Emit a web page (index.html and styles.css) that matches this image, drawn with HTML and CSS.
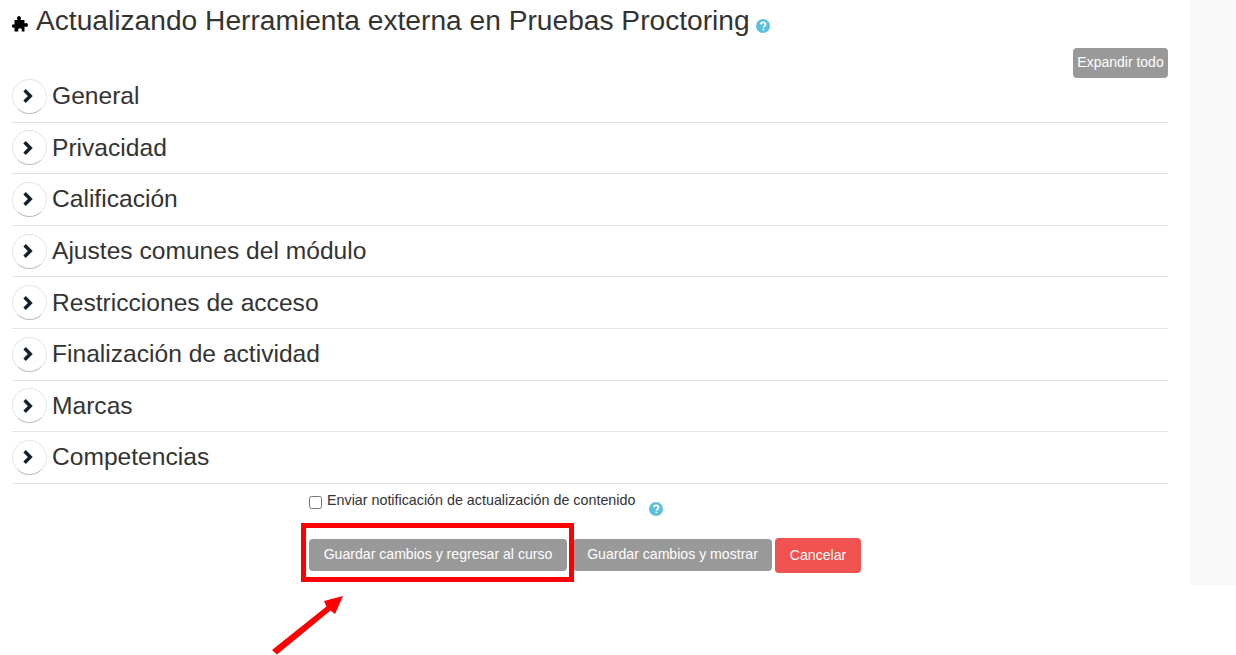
FILE: index.html
```html
<!DOCTYPE html>
<html lang="es">
<head>
    <meta charset="UTF-8">
    <title>Actualizando Herramienta externa</title>
    <link rel="stylesheet" href="styles.css">
</head>
<body>
    <div class="page">
        <main class="content">
            <h1 class="page-title">
                <svg class="puzzle" viewBox="0 0 16 16"><path d="M5 2.300C5 1 5.800 0 7 0s2 1 2 2.300C9 3.200 8.600 3.600 8.600 4H12.500v3.500c.5 0 .9-.4 1.500-.4 1.200 0 2 .8 2 1.900S15.200 11 14 11c-.6 0-1-.4-1.500-.4V15.500H9.500c0-.5.4-.9.4-1.500 0-1-.8-1.700-1.900-1.700s-1.900.7-1.900 1.700c0 .6.400 1 .4 1.500H2.500v-4c-.5 0-.9.300-1.300.300C.5 11.800 0 11 0 10s.5-1.800 1.200-1.800c.4 0 .8.300 1.300.3V4h3C5.500 3.500 5 3.100 5 2.300z"/></svg>
                <span>Actualizando Herramienta externa en Pruebas Proctoring</span>
                <svg class="help help-title" viewBox="0 0 14 14"><circle cx="7" cy="7" r="7"/><path class="help-mark" d="M4.700 5.400C4.800 4 5.800 3.300 7.100 3.300c1.400 0 2.400.8 2.400 2 0 1.900-2.100 1.800-2.100 3.200M7.400 9.800v1.400"/></svg>
            </h1>
            <div class="expand-row">
                <a class="btn btn-small" href="#">Expandir todo</a>
            </div>
            <div class="section"><span class="toggle"><svg viewBox="0 0 12 14"><path d="M3 2l5 5-5 5"/></svg></span><h2>General</h2></div>
            <div class="section"><span class="toggle"><svg viewBox="0 0 12 14"><path d="M3 2l5 5-5 5"/></svg></span><h2>Privacidad</h2></div>
            <div class="section"><span class="toggle"><svg viewBox="0 0 12 14"><path d="M3 2l5 5-5 5"/></svg></span><h2>Calificación</h2></div>
            <div class="section"><span class="toggle"><svg viewBox="0 0 12 14"><path d="M3 2l5 5-5 5"/></svg></span><h2>Ajustes comunes del módulo</h2></div>
            <div class="section"><span class="toggle"><svg viewBox="0 0 12 14"><path d="M3 2l5 5-5 5"/></svg></span><h2>Restricciones de acceso</h2></div>
            <div class="section"><span class="toggle"><svg viewBox="0 0 12 14"><path d="M3 2l5 5-5 5"/></svg></span><h2>Finalización de actividad</h2></div>
            <div class="section"><span class="toggle"><svg viewBox="0 0 12 14"><path d="M3 2l5 5-5 5"/></svg></span><h2>Marcas</h2></div>
            <div class="section"><span class="toggle"><svg viewBox="0 0 12 14"><path d="M3 2l5 5-5 5"/></svg></span><h2>Competencias</h2></div>
            <div class="notify">
                <input type="checkbox" id="notify">
                <label for="notify">Enviar notificación de actualización de contenido</label>
                <svg class="help help-notify" viewBox="0 0 14 14"><circle cx="7" cy="7" r="7"/><path class="help-mark" d="M4.700 5.400C4.800 4 5.800 3.300 7.100 3.300c1.400 0 2.400.8 2.400 2 0 1.900-2.100 1.800-2.100 3.200M7.400 9.800v1.400"/></svg>
            </div>
            <div class="actions">
                <a class="btn btn-save" href="#">Guardar cambios y regresar al curso</a>
                <a class="btn btn-show" href="#">Guardar cambios y mostrar</a>
                <a class="btn btn-cancel" href="#">Cancelar</a>
                <span class="mark-box"></span>
            </div>
        </main>
        <aside class="side"></aside>
    </div>
    <svg class="mark-arrow" viewBox="0 0 90 70"><path d="M2 60L56.500 16.500 54 11 73 6 65 24 60.500 20.500 7 64.500z"/></svg>
</body>
</html>
```

FILE: styles.css
```css
body {
    margin: 0;
    height: 655px;
    overflow: hidden;
    position: relative;
    background-color: white;
    font-family: "Liberation Sans", Arial, sans-serif;
    color: #333;
}
.page {
    display: flex;
    height: 585px;
}
.content {
    width: 1156px;
    padding: 0 22px 0 12px;
}
.side {
    width: 46px;
    background-color: #f9f9f9;
}
.page-title {
    display: flex;
    align-items: center;
    height: 41px;
    margin: 0;
    font-size: 28.160px;
    font-weight: normal;
    line-height: 41px;
}
.puzzle {
    width: 16px;
    height: 16px;
    margin-right: 8px;
    margin-top: 6px;
    fill: #000;
}
.help {
    width: 14px;
    height: 14px;
    fill: #5bc0de;
}
.help-mark {
    fill: none;
    stroke: white;
    stroke-width: 1.800;
}
.help-title {
    margin: 11px 0 0 6px;
}
.expand-row {
    display: flex;
    justify-content: flex-end;
    height: 23px;
    padding-top: 7px;
}
.btn {
    display: inline-block;
    box-sizing: border-box;
    text-align: center;
    text-decoration: none;
    color: white;
    background-color: #999;
    border-radius: 4px;
}
.btn-small {
    width: 95px;
    height: 30px;
    font-size: 14px;
    line-height: 29px;
}
.section {
    display: flex;
    align-items: center;
    height: 51.600px;
    box-sizing: border-box;
    border-bottom: 1px solid #e3e3e8;
}
.section h2 {
    margin: 0;
    font-size: 24.600px;
    font-weight: normal;
}
.toggle {
    display: flex;
    align-items: center;
    justify-content: center;
    box-sizing: border-box;
    width: 35px;
    height: 35px;
    margin-right: 5px;
    border: 1px solid #e6e6e6;
    border-bottom-color: #bbb;
    border-radius: 50%;
}
.toggle svg {
    width: 14px;
    height: 16px;
    margin-right: 3px;
    fill: none;
    stroke: #14202c;
    stroke-width: 3;
}
.notify {
    display: flex;
    align-items: flex-start;
    height: 54px;
    padding: 8px 0 0 297px;
    box-sizing: border-box;
    font-size: 14.300px;
}
.notify input {
    width: 13px;
    height: 13px;
    margin: 4px 6px 0 0;
}
.notify label {
    line-height: 16px;
    margin-left: -1px;
}
.help-notify {
    margin: 10px 0 0 14px;
}
.actions {
    position: relative;
    display: flex;
    align-items: center;
    gap: 3px;
    height: 36px;
    margin-top: -0.500px;
    padding-left: 297px;
    font-size: 14.100px;
}
.btn-save {
    width: 258px;
    height: 32px;
    line-height: 31px;
    margin-right: 3px;
}
.btn-show {
    width: 199px;
    height: 32px;
    line-height: 31px;
}
.btn-cancel {
    width: 86px;
    height: 35px;
    line-height: 35px;
    background-color: #f0524f;
}
.mark-box {
    position: absolute;
    left: 289px;
    top: -14px;
    width: 273px;
    height: 59px;
    box-sizing: border-box;
    border: 5px solid #f00;
}
.mark-arrow {
    position: absolute;
    left: 270px;
    top: 590px;
    width: 90px;
    height: 70px;
    fill: #f00;
}
```
